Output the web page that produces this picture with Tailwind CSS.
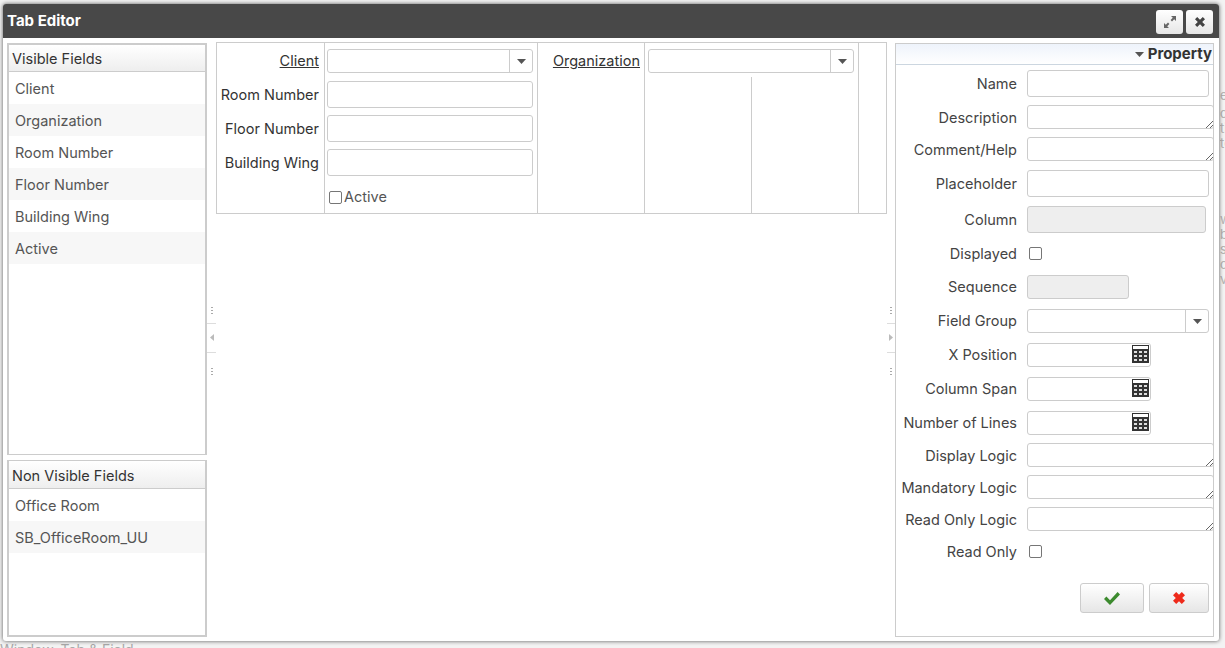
<!DOCTYPE html>
<html lang="en">
<head>
  <meta charset="UTF-8" />
  <title>Tab Editor</title>
  <script src="https://cdn.jsdelivr.net/npm/@tailwindcss/browser@4"></script>
</head>
<body class="relative w-[1225px] h-[648px] overflow-hidden bg-[#f3f3f3] font-['Inter','Liberation_Sans',sans-serif] text-[14.5px] text-[#333]">

  <!-- page behind the dialog -->
  <p class="absolute left-0 top-[642px] text-[14px] leading-[16px] text-[#aaa]">Window, Tab &amp; Field</p>
  <div class="absolute left-[1220px] top-[88px] w-[5px] overflow-hidden text-[13px] leading-[15px] text-[#b5b5b5]">
    <p>e</p>
    <p class="mt-[3px]">d</p>
    <p>ti</p>
    <p>te</p>
    <p class="mt-[61px]">w</p>
    <p>b</p>
    <p>s</p>
    <p>c</p>
    <p>v</p>
  </div>

  <div class="absolute left-[3px] top-[4px] w-[1216px] h-[637px] bg-white rounded-[3px] shadow-[0_0_4px_rgba(0,0,0,0.65)] overflow-hidden">

    <!-- title bar -->
    <header class="h-[34px] bg-[#484848] flex items-center justify-between pl-[4px] pr-[6px]">
      <h1 class="text-[15px] font-bold text-white">Tab Editor</h1>
      <div class="flex gap-[3px] pt-[2px]">
        <button class="w-[27px] h-[24px] rounded-[3px] bg-linear-to-b from-white to-[#e6e6e6] flex items-center justify-center">
          <svg width="14" height="14" viewBox="0 0 14 14" fill="#666"><path d="M8 1h5v5l-1.800-1.800L9 6.400 7.600 5l2.200-2.200zM6 13H1V8l1.800 1.800L5 7.600 6.400 9l-2.200 2.200z"/></svg>
        </button>
        <button class="w-[27px] h-[24px] rounded-[3px] bg-linear-to-b from-white to-[#e6e6e6] flex items-center justify-center">
          <svg width="12" height="12" viewBox="0 0 12 12" fill="#444"><path d="M3.200 1 6 3.800 8.800 1 11 3.200 8.200 6 11 8.800 8.800 11 6 8.200 3.200 11 1 8.800 3.800 6 1 3.200z"/></svg>
        </button>
      </div>
    </header>

    <div class="flex pl-[4px] pt-[5px] h-[599px]">

      <!-- field lists -->
      <aside class="w-[200px] h-[594px] flex flex-col shrink-0">
        <section class="h-[412px] border-x-2 border-t-2 border-b border-[#ccc]">
          <h2 class="h-[27px] pl-[3px] pt-[1px] flex items-center bg-linear-to-b from-white to-[#eee] border-b border-[#ccc] text-[#333]">Visible Fields</h2>
          <ul class="text-[#555]">
            <li class="h-[32px] pl-[6px] pt-[2px] flex items-center">Client</li>
            <li class="h-[32px] pl-[6px] pt-[2px] flex items-center bg-[#f7f7f7]">Organization</li>
            <li class="h-[32px] pl-[6px] pt-[2px] flex items-center">Room Number</li>
            <li class="h-[32px] pl-[6px] pt-[2px] flex items-center bg-[#f7f7f7]">Floor Number</li>
            <li class="h-[32px] pl-[6px] pt-[2px] flex items-center">Building Wing</li>
            <li class="h-[32px] pl-[6px] pt-[2px] flex items-center bg-[#f7f7f7]">Active</li>
          </ul>
        </section>
        <section class="mt-[5px] h-[177px] border-x-2 border-b-2 border-t border-[#ccc]">
          <h2 class="h-[28px] pl-[3px] pt-[2px] flex items-center bg-linear-to-b from-white to-[#eee] border-b border-[#ccc] text-[#333]">Non Visible Fields</h2>
          <ul class="text-[#555]">
            <li class="h-[32px] pl-[6px] pt-[2px] flex items-center">Office Room</li>
            <li class="h-[32px] pl-[6px] pt-[2px] flex items-center bg-[#f7f7f7]">SB_OfficeRoom_UU</li>
          </ul>
        </section>
      </aside>

      <!-- left splitter -->
      <div class="w-[9px] h-[594px] shrink-0 flex flex-col items-center justify-center">
        <div class="w-[2px] h-[8px] bg-[radial-gradient(circle,#aaa_1px,transparent_1px)] bg-[length:2px_3px]"></div>
        <div class="mt-[9px] w-full h-[30px] border-y border-[#ddd] flex items-center justify-center">
          <svg width="4" height="7" viewBox="0 0 4 7" fill="#bbb"><path d="M4 0v7L0 3.500z"/></svg>
        </div>
        <div class="mt-[14px] w-[2px] h-[8px] bg-[radial-gradient(circle,#aaa_1px,transparent_1px)] bg-[length:2px_3px]"></div>
      </div>

      <!-- form preview -->
      <main class="w-[671px] h-[172px] -mt-[1px] shrink-0 flex border border-[#ccc]">
        <div class="w-[108px] border-r border-[#ccc] pr-[5px] pt-[6px] flex flex-col items-end text-[#333]">
          <label class="h-[24px] flex items-center underline">Client</label>
          <label class="h-[27px] mt-[8px] flex items-center">Room Number</label>
          <label class="h-[27px] mt-[7px] flex items-center">Floor Number</label>
          <label class="h-[27px] mt-[7px] flex items-center">Building Wing</label>
        </div>
        <div class="w-[213px] border-r border-[#ccc] pl-[2px] pr-[4px] pt-[6px] flex flex-col">
          <div class="h-[24px] border border-[#ccc] rounded-[3px] flex justify-end">
            <span class="w-[23px] border-l border-[#ccc] flex items-center justify-center">
              <svg width="9" height="5" viewBox="0 0 9 5" fill="#555"><path d="M0 0h9L4.500 5z"/></svg>
            </span>
          </div>
          <input class="h-[27px] mt-[8px] border border-[#ccc] rounded-[3px]" />
          <input class="h-[27px] mt-[7px] border border-[#ccc] rounded-[3px]" />
          <input class="h-[27px] mt-[7px] border border-[#ccc] rounded-[3px]" />
          <label class="mt-[10px] h-[22px] flex items-center pl-[2px] text-[#555]">
            <span class="w-[13px] h-[13px] mr-[2px] border border-[#767676] rounded-[2px]"></span>Active
          </label>
        </div>
        <div class="w-[107px] border-r border-[#ccc] pr-[4px] pt-[6px] flex justify-end">
          <label class="h-[24px] flex items-center underline">Organization</label>
        </div>
        <div class="w-[214px] border-r border-[#ccc] flex flex-col">
          <div class="pl-[3px] pr-[4px] pt-[6px] h-[34px]">
            <div class="h-[24px] border border-[#ccc] rounded-[3px] flex justify-end">
              <span class="w-[23px] border-l border-[#ccc] flex items-center justify-center">
                <svg width="9" height="5" viewBox="0 0 9 5" fill="#555"><path d="M0 0h9L4.500 5z"/></svg>
              </span>
            </div>
          </div>
          <div class="flex-1 flex">
            <div class="w-[107px] border-r border-[#ccc]"></div>
          </div>
        </div>
      </main>

      <!-- right splitter -->
      <div class="w-[8px] h-[594px] shrink-0 flex flex-col items-center justify-center">
        <div class="w-[2px] h-[8px] bg-[radial-gradient(circle,#aaa_1px,transparent_1px)] bg-[length:2px_3px]"></div>
        <div class="mt-[9px] w-full h-[30px] border-y border-[#ddd] flex items-center justify-center">
          <svg width="4" height="7" viewBox="0 0 4 7" fill="#bbb"><path d="M0 0v7l4-3.500z"/></svg>
        </div>
        <div class="mt-[14px] w-[2px] h-[8px] bg-[radial-gradient(circle,#aaa_1px,transparent_1px)] bg-[length:2px_3px]"></div>
      </div>

      <!-- property panel -->
      <section class="w-[319px] h-[594px] shrink-0 border border-[#ccc] overflow-hidden text-[#444]">
        <h2 class="h-[21px] pr-[1px] flex items-center justify-end gap-[4px] bg-linear-to-b from-[#eef3fb] to-white border-b border-[#ccd6e0] text-[15px] font-bold text-[#333]">
          <svg width="9" height="5" viewBox="0 0 9 5" fill="#555"><path d="M0 0h9L4.500 5z"/></svg>Property
        </h2>

        <div class="h-[27px] mt-[5px] flex items-center"><label class="w-[121px] shrink-0 text-right">Name</label><input class="ml-[10px] w-[182px] h-[27px] border border-[#ccc] rounded-[3px]" /></div>

        <div class="h-[24px] mt-[8px] flex items-center"><label class="w-[121px] shrink-0 text-right mt-[2px]">Description</label>
          <div class="relative ml-[10px] w-[187px] h-[24px] border border-[#ccc] rounded-[3px] shrink-0">
            <svg class="absolute right-0 bottom-0" width="8" height="8" viewBox="0 0 8 8" stroke="#666" fill="none"><path d="M1 8 8 1M5 8l3-3"/></svg>
          </div>
        </div>
        <div class="h-[24px] mt-[8px] flex items-center"><label class="w-[121px] shrink-0 text-right mt-[2px]">Comment/Help</label>
          <div class="relative ml-[10px] w-[187px] h-[24px] border border-[#ccc] rounded-[3px] shrink-0">
            <svg class="absolute right-0 bottom-0" width="8" height="8" viewBox="0 0 8 8" stroke="#666" fill="none"><path d="M1 8 8 1M5 8l3-3"/></svg>
          </div>
        </div>
        <div class="h-[27px] mt-[9px] flex items-center"><label class="w-[121px] shrink-0 text-right">Placeholder</label><input class="ml-[10px] w-[182px] h-[27px] border border-[#ccc] rounded-[3px]" /></div>
        <div class="h-[27px] mt-[9px] flex items-center"><label class="w-[121px] shrink-0 text-right">Column</label><div class="ml-[10px] w-[179px] h-[27px] bg-[#eee] border border-[#ccc] rounded-[3px]"></div></div>
        <div class="h-[24px] mt-[8px] flex items-center"><label class="w-[121px] shrink-0 text-right mt-[2px]">Displayed</label><span class="ml-[12px] w-[13px] h-[13px] border border-[#767676] rounded-[2px]"></span></div>
        <div class="h-[24px] mt-[10px] flex items-center"><label class="w-[121px] shrink-0 text-right -mt-[1px]">Sequence</label><div class="ml-[10px] w-[102px] h-[24px] bg-[#eee] border border-[#ccc] rounded-[3px]"></div></div>

        <div class="h-[24px] mt-[10px] flex items-center"><label class="w-[121px] shrink-0 text-right -mt-[1px]">Field Group</label>
          <div class="ml-[10px] w-[182px] h-[24px] border border-[#ccc] rounded-[3px] flex justify-end">
            <span class="w-[23px] border-l border-[#ccc] flex items-center justify-center">
              <svg width="9" height="5" viewBox="0 0 9 5" fill="#555"><path d="M0 0h9L4.500 5z"/></svg>
            </span>
          </div>
        </div>

        <div class="h-[24px] mt-[10px] flex items-center"><label class="w-[121px] shrink-0 text-right -mt-[1px]">X Position</label>
          <div class="ml-[10px] w-[124px] h-[24px] border border-[#ccc] rounded-[3px] flex items-start justify-end pr-[1px] pt-[1px]">
            <svg width="17" height="18" viewBox="0 0 17 18"><rect width="17" height="18" fill="#333"/><rect x="1" y="1" width="15" height="3" fill="#fff"/><path d="M2 6h3v2H2zM7 6h3v2H7zM12 6h3v2h-3zM2 10h3v2H2zM7 10h3v2H7zM12 10h3v2h-3zM2 14h3v2H2zM7 14h3v2H7zM12 14h3v2h-3z" fill="#ddd"/></svg>
          </div>
        </div>
        <div class="h-[24px] mt-[10px] flex items-center"><label class="w-[121px] shrink-0 text-right -mt-[1px]">Column Span</label>
          <div class="ml-[10px] w-[124px] h-[24px] border border-[#ccc] rounded-[3px] flex items-start justify-end pr-[1px] pt-[1px]">
            <svg width="17" height="18" viewBox="0 0 17 18"><rect width="17" height="18" fill="#333"/><rect x="1" y="1" width="15" height="3" fill="#fff"/><path d="M2 6h3v2H2zM7 6h3v2H7zM12 6h3v2h-3zM2 10h3v2H2zM7 10h3v2H7zM12 10h3v2h-3zM2 14h3v2H2zM7 14h3v2H7zM12 14h3v2h-3z" fill="#ddd"/></svg>
          </div>
        </div>
        <div class="h-[24px] mt-[10px] flex items-center"><label class="w-[121px] shrink-0 text-right -mt-[1px]">Number of Lines</label>
          <div class="ml-[10px] w-[124px] h-[24px] border border-[#ccc] rounded-[3px] flex items-start justify-end pr-[1px] pt-[1px]">
            <svg width="17" height="18" viewBox="0 0 17 18"><rect width="17" height="18" fill="#333"/><rect x="1" y="1" width="15" height="3" fill="#fff"/><path d="M2 6h3v2H2zM7 6h3v2H7zM12 6h3v2h-3zM2 10h3v2H2zM7 10h3v2H7zM12 10h3v2h-3zM2 14h3v2H2zM7 14h3v2H7zM12 14h3v2h-3z" fill="#ddd"/></svg>
          </div>
        </div>

        <div class="h-[24px] mt-[8px] flex items-center"><label class="w-[121px] shrink-0 text-right mt-[2px]">Display Logic</label>
          <div class="relative ml-[10px] w-[187px] h-[24px] border border-[#ccc] rounded-[3px] shrink-0">
            <svg class="absolute right-0 bottom-0" width="8" height="8" viewBox="0 0 8 8" stroke="#666" fill="none"><path d="M1 8 8 1M5 8l3-3"/></svg>
          </div>
        </div>
        <div class="h-[24px] mt-[8px] flex items-center"><label class="w-[121px] shrink-0 text-right mt-[2px]">Mandatory Logic</label>
          <div class="relative ml-[10px] w-[187px] h-[24px] border border-[#ccc] rounded-[3px] shrink-0">
            <svg class="absolute right-0 bottom-0" width="8" height="8" viewBox="0 0 8 8" stroke="#666" fill="none"><path d="M1 8 8 1M5 8l3-3"/></svg>
          </div>
        </div>
        <div class="h-[24px] mt-[8px] flex items-center"><label class="w-[121px] shrink-0 text-right mt-[2px]">Read Only Logic</label>
          <div class="relative ml-[10px] w-[187px] h-[24px] border border-[#ccc] rounded-[3px] shrink-0">
            <svg class="absolute right-0 bottom-0" width="8" height="8" viewBox="0 0 8 8" stroke="#666" fill="none"><path d="M1 8 8 1M5 8l3-3"/></svg>
          </div>
        </div>
        <div class="h-[24px] mt-[8px] flex items-center"><label class="w-[121px] shrink-0 text-right mt-[2px]">Read Only</label><span class="ml-[12px] w-[13px] h-[13px] border border-[#767676] rounded-[2px]"></span></div>

        <div class="mt-[20px] pl-[184px] flex gap-[5px]">
          <button class="w-[64px] h-[30px] rounded-[3px] border border-[#ccc] bg-linear-to-b from-white to-[#e6e6e6] flex items-center justify-center">
            <svg width="16" height="13" viewBox="0 0 16 13" fill="#3c8a2e"><path d="M6 13 0 7l2.400-2.400L6 8.200 13.600 0 16 2.400z"/></svg>
          </button>
          <button class="w-[60px] h-[30px] rounded-[3px] border border-[#ccc] bg-linear-to-b from-white to-[#e6e6e6] flex items-center justify-center">
            <svg width="12" height="12" viewBox="0 0 12 12" fill="#ee2a1b"><path d="M3.200 0 6 2.800 8.800 0 12 3.200 9.200 6 12 8.800 8.800 12 6 9.200 3.200 12 0 8.800 2.800 6 0 3.200z"/></svg>
          </button>
        </div>
      </section>
    </div>
  </div>
</body>
</html>
